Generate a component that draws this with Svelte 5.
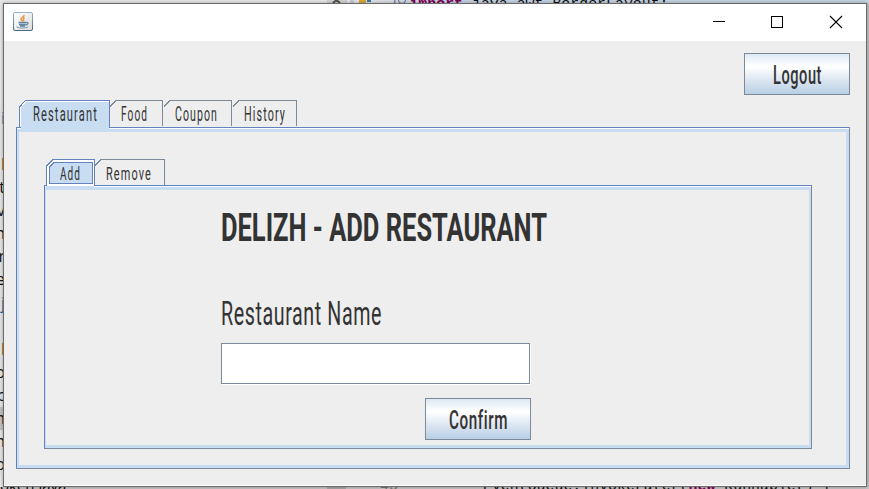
<script>
  const tabs = [
    { label: 'Restaurant', w: 91, tx: 14, tw: 65, active: true },
    { label: 'Food', w: 53, tx: 11, tw: 27 },
    { label: 'Coupon', w: 69, tx: 12, tw: 43 },
    { label: 'History', w: 65, tx: 12, tw: 42 }
  ];
  const codeEdge = ['i', '', 'l', 't', 'v', 'n', 'r', 'e', 'j', '', 'l', 'o', 'c', 'm', 'm', 'o'];
  const edgeColor = { i: '#2a7ab8', l: '#a05a10', j: '#1c5fa8' };
</script>

{#snippet fit(text, x, y, width, size, cls)}
  <text class={cls} {x} {y} textLength={width} lengthAdjust="spacingAndGlyphs" font-size={size}>{text}</text>
{/snippet}

<div class="desktop">
  <div class="edge">
    {#each codeEdge as ch, i}
      <span class:current={i === 13} style:color={edgeColor[ch] ?? '#111'}>{ch}</span>
    {/each}
  </div>
  <div class="topcode">
    <svg class="marks" width="85" height="3">
      <rect x="2" width="20" height="3" fill="#d4d4d4" />
      <path d="M8 3 L11.500 0 L15 3" fill="none" stroke="#555" stroke-width="2" />
      <rect x="25" width="4" height="3" fill="#c8cbdd" />
      <rect x="34" width="7" height="3" fill="#dda93b" />
      <path d="M42 1h4" stroke="#357b9f" stroke-width="2" />
      <circle cx="77" cy="0" r="3.500" fill="none" stroke="#56708a" />
    </svg>
    <span class="num">1</span>
    <pre><b>import</b> java.awt.BorderLayout;</pre>
  </div>
  <div class="bottomcode">
    <span class="token">oken java</span>
    <i></i>
    <span class="line">45</span>
    <pre>EventQueue.invokeLater(<b>new</b> Runnable() {'{'}</pre>
  </div>

  <main class="window">
    <header>
      <svg class="java" width="20" height="19" viewBox="0 0 20 19">
        <defs>
          <linearGradient id="jb" x2="0" y2="1"><stop stop-color="#9db2c6" /><stop offset="1" stop-color="#49697f" /></linearGradient>
          <linearGradient id="jf" x2="1" y2="1"><stop stop-color="#fff" /><stop offset="1" stop-color="#d9dcdf" /></linearGradient>
        </defs>
        <rect x=".5" y=".5" width="19" height="18" rx="1.500" fill="url(#jf)" stroke="url(#jb)" />
        <path d="M11 3C11.500 5 7.500 5.500 8 7.500C8.200 8.500 9.500 8.500 9.500 9.500M11.500 5.500C9 7 11.500 7.500 10.500 9.500" fill="none" stroke="#e9923f" stroke-width="1.500" />
        <path d="M5.500 10.500H13.500M6 12.500H12.500M7 14H12M13 10.500C16 10 15.500 12.800 12.500 13" fill="none" stroke="#6388a2" stroke-width="1.300" />
        <path d="M3.500 14.500C4 16.500 13 16.500 15 14.700" fill="none" stroke="#7894a8" />
      </svg>
      <svg class="controls" width="132" height="20" fill="none" stroke="#000" shape-rendering="crispEdges">
        <path d="M2 9.500h12M60.500 4.500h11v11h-11z" />
        <path d="M119 4l12 12M131 4l-12 12" shape-rendering="auto" stroke-width="1.100" />
      </svg>
    </header>

    <section class="content">
      <div class="toolbar">
        <button><svg width="104" height="40">{@render fit('Logout', 28, 30, 49, 26, 'btn')}</svg></button>
      </div>

      <nav class="tabs outer-tabs">
        {#each tabs as t, i}
          <svg class="tab" width={t.w} height={t.active ? 32 : 26} shape-rendering="crispEdges">
            {#if t.active}
              <path d="M2 32V7L7 2H90V32Z" fill="#c8ddf2" />
              <path d="M1.500 27V7L7 1.500H90" fill="none" stroke="#fff" />
              <path d="M.5 27V7L6.500 .5H90M90.500 0V28" fill="none" stroke="#6382bf" />
            {:else}
              <path d="M{i > 1 ? 1 : 0} 6.500L{i > 1 ? 7 : 6} .5H{t.w - 0.5}V26" fill="none" stroke="#7a8a99" />
            {/if}
            {@render fit(t.label, t.tx, 21, t.tw, 19.4, 'tablabel')}
          </svg>
        {/each}
      </nav>

      <div class="panel">
        <nav class="tabs inner-tabs">
          <svg class="tab" width="49" height="31" shape-rendering="crispEdges">
            <path d="M0 27H48V31H0Z" fill="#c8ddf2" />
            <path d="M1 27V7L8 1H48V27Z" fill="#fff" />
            <path d="M3.500 24.500V8L8 3.500H46.500V24.500Z" fill="#c8ddf2" stroke="#6382bf" />
            <path d="M.5 27V7L7 .5H48M48.500 0V27" fill="none" stroke="#6382bf" />
            {@render fit('Add', 14, 20.5, 21, 19, 'tablabel')}
          </svg>
          <svg class="tab" width="70" height="26" shape-rendering="crispEdges">
            <path d="M0 6.500L6 .5H69.500V26" fill="none" stroke="#7a8a99" />
            {@render fit('Remove', 11, 20.5, 46, 19, 'tablabel')}
          </svg>
        </nav>

        <div class="form">
          <svg class="heading" width="340" height="50">{@render fit('DELIZH - ADD RESTAURANT', 0, 38, 326, 38.8, 'title')}</svg>
          <svg class="caption" width="200" height="40">{@render fit('Restaurant Name', 0, 29.5, 161, 33, 'label')}</svg>
          <input aria-label="Restaurant Name" />
          <button><svg width="104" height="40">{@render fit('Confirm', 23, 30, 59, 26, 'btn')}</svg></button>
        </div>
      </div>
    </section>
  </main>
</div>

<style>
  :global(body) { margin: 0; overflow: hidden; }
  * { box-sizing: border-box; }
  svg { display: block; flex: none; }
  .desktop {
    position: relative; width: 869px; height: 489px; overflow: hidden; padding: 3px 2px 2px 3px;
    background: linear-gradient(90deg, #eee 0, #ddd 4px, #ccc 860px, #c4c4c4);
  }
  .edge {
    position: absolute; left: 0; top: 107px; width: 5px; display: flex; flex-direction: column; align-items: flex-end;
    background: #e6e6e6; font: 16px/23.07px "Open Sans", sans-serif;
  }
  .edge span { height: 23.07px; width: 5px; display: flex; justify-content: flex-end; }
  .edge .current { background: #c2c2c2; }
  .topcode {
    position: absolute; left: 0; top: 0; width: 869px; height: 3px; overflow: hidden; padding-left: 325px; display: flex;
    background: linear-gradient(90deg, #e9e9e9 350px, #c7d3e3 440px, #c7d3e3);
  }
  .marks { margin-right: -20px; }
  .num { margin-top: -5px; color: #777; font: 14px/17px "Liberation Mono", monospace; }
  pre { margin: 0; font: 14.9px/17px "Liberation Mono", monospace; color: #111; }
  pre b { color: #7f0055; }
  .topcode pre { margin: -4px 0 0 11px; }
  .bottomcode {
    position: absolute; left: 0; bottom: 0; width: 869px; height: 2px; overflow: hidden; display: flex; background: #c9c7c7;
  }
  .token { width: 327px; margin-top: -10px; font: 15px/17px "Open Sans", sans-serif; }
  .bottomcode i { width: 19px; background: #aaa; }
  .line { width: 137px; padding-left: 34px; margin-top: -9px; color: #777; font: 15px/17px "Liberation Mono", monospace; }
  .bottomcode pre { margin-top: -9px; }
  .window {
    position: relative; width: 864px; height: 484px; border: 1px solid #6b6b6b; background: #eee;
    box-shadow: 0 0 4px #0005; display: flex; flex-direction: column;
  }
  header { height: 37px; flex: none; display: flex; justify-content: space-between; padding: 8px 23px 0 9px; background: #fff; }
  .content { flex: 1; padding: 12px 16px 0 12px; border-bottom: 1px solid #fff; }
  .toolbar { display: flex; justify-content: flex-end; height: 47px; }
  button {
    flex: none; width: 106px; height: 42px; padding: 0; border: 1px solid #7a8a99; border-radius: 0;
    background: linear-gradient(#dde8f3 0, #fff 30%, #fff 33%, #dce6f1 65%, #b8cfe5);
  }
  text { font-family: Roboto, "Liberation Sans", sans-serif; fill: #333; }
  .tablabel { letter-spacing: 2px; font-weight: 400; }
  .label { font-weight: 400; letter-spacing: 1px; }
  .btn { font-weight: 500; letter-spacing: 1px; }
  .title { font-weight: 700; }
  .tabs { display: flex; align-items: flex-start; position: relative; z-index: 1; }
  .outer-tabs { height: 27px; padding-left: 3px; }
  .panel {
    width: 834px; height: 342px; padding: 27px 34px 0 25px;
    border: 1px solid #7a8a99; border-top-color: #6382bf; border-left-color: #6382bf;
    box-shadow: inset 0 1px #fff, inset 2px 0 #c8ddf2, inset -3px -3px #c8ddf2, inset 0 4px #c8ddf2;
  }
  .inner-tabs { height: 26px; padding-left: 4px; margin-top: 4px; }
  .form {
    width: 768px; height: 264px; margin-left: 2px; padding: 17px 0 0 176px; display: flex; flex-direction: column;
    border: 1px solid #7a8a99; border-top-color: #6382bf; border-left-color: #6382bf;
    box-shadow: inset 0 1px #fff, inset 1px 0 #c8ddf2, inset -2px -3px #c8ddf2, inset 0 4px #c8ddf2;
  }
  .caption { margin-top: 42px; }
  input { flex: none; width: 309px; height: 41px; margin-top: 8px; border: 1px solid #7a8a99; border-radius: 0; background: #fff; box-shadow: 1px 1px #fff; }
  .form button { margin: 14px 0 0 204px; }
</style>
